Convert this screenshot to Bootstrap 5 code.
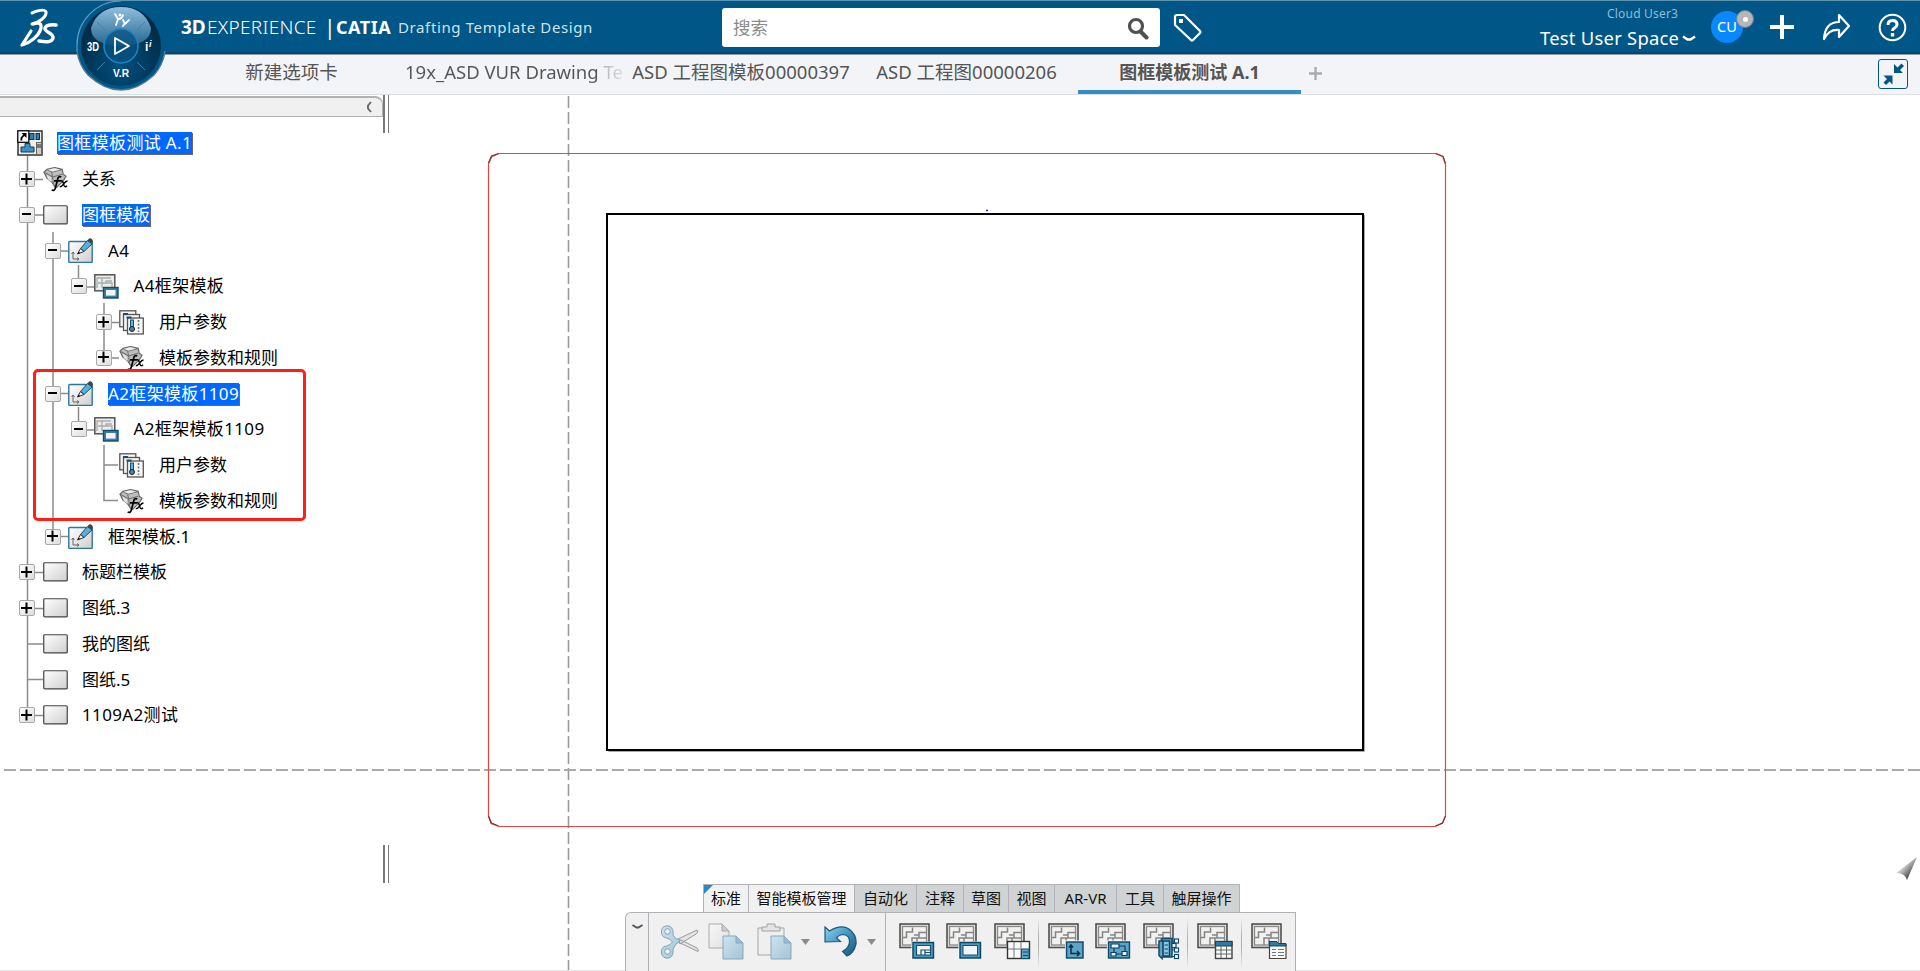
<!DOCTYPE html>
<html lang="zh-CN">
<head>
<meta charset="utf-8">
<title>3DEXPERIENCE | CATIA Drafting Template Design</title>
<link href="https://cdn.jsdelivr.net/npm/bootstrap@5.3.0/dist/css/bootstrap.min.css" rel="stylesheet">
<style>
body{width:1920px;height:971px;overflow:hidden;background:#fff;font-family:"Noto Sans","Noto Sans CJK SC",sans-serif;color:#000;white-space:nowrap}
svg{display:block;flex:none}
.topbar{height:55px;background:#005686;border-top:1px solid #5e93b0;border-bottom:1px solid #8f9aa0;box-shadow:inset 0 -2px #004870;color:#fff}
.brand-logo{margin-left:18px}
.compass{left:72px;top:0;z-index:5}
.app-title{margin-left:121px;width:541px;font-size:18px;line-height:52px}
.app-title .w1{width:26px;font-size:19px;font-weight:700}
.app-title .w2{width:117px;letter-spacing:.3px;font-weight:300;font-size:19px}
.app-title .w3{width:12px;font-size:21px;font-weight:400}
.app-title .w4{width:62px;font-weight:700;font-size:18px;letter-spacing:.5px}
.app-title .w5{font-size:15px;letter-spacing:.62px;color:#cfe2ee}
.search{width:438px;height:39px;border-radius:3px;background:#fff;color:#8b8b8b;font-size:17.5px;margin-top:7px;padding:0 11px 0 11px}
.user-box{width:160px;margin-left:337px}
.user-name{font-size:12px;line-height:14px;color:#8fbcd6;letter-spacing:.2px;padding-left:67px;margin-top:6px}
.user-space{font-size:18.4px;line-height:22px;letter-spacing:.25px;margin-top:6px}
.avatar-cu{width:32px;height:32px;background:#0a88ff;font-size:14.5px;margin:10px 0 0 11px;line-height:30px}
.avatar-dot{left:25px;top:-1px;width:18px;height:18px;background:#b4b6b8;border:1px solid #68818f}
.avatar-dot::after{content:"";width:5px;height:5px;border-radius:50%;background:#fff}
.tabbar{height:40px;background:#f3f4f7;border-bottom:1px solid #dcdfe4;padding-left:186px;color:#555;font-size:18.5px}
.doc-tab{width:223px;height:39px;line-height:34px;text-align:center;overflow:hidden}
.doc-tab.current{font-weight:700;border-bottom:4px solid #368ec4;font-size:18px}
.fade-tail{background:linear-gradient(90deg,#555 192px,#bbb 200px,#d8d8dc 217px,transparent 219px);-webkit-background-clip:text;color:transparent;text-align:left}
.shrink-btn{width:30px;height:30px;border:1px solid #005686;border-radius:3px;margin:4px 12px 0 0}
.workspace{height:876px}
.side{width:389px}
.side-head{width:383px;height:21px;margin-top:1px;background:#f0f0f0;border:1px solid #b0b0b5;border-left:0;border-top-width:2px;border-radius:0 8px 0 0;padding-right:10px}
.grip{right:0;width:6px;height:38px;border-left:2px solid #777;border-right:1px solid #777}
.tree{padding-top:8.5px;font-size:17px}
.tree-row{height:35.75px;gap:8px}
.tree-row .lbl{line-height:22px;height:22px;margin-left:6px}
.tree-row .sel{background:#0068ff;color:#fff;box-shadow:1px 1px #667;}
.l0{padding-left:17px}.l1{padding-left:19px}.l2{padding-left:45px}.l3{padding-left:70.5px}.l4{padding-left:96px}
.l2 svg,.l3 svg,.l4 svg{margin-left:-1px}
.l2 .lbl,.l3 .lbl,.l4 .lbl{margin-left:7px}
.tree-row .lat{letter-spacing:.35px}
.pm{width:16px;height:16px;border:1.5px solid #a8a8a8;border-radius:2px;background:linear-gradient(135deg,#fff,#ddd);position:relative;flex:none}
.pm::before,.pm.plus::after{content:"";position:absolute;left:2px;top:5.5px;width:9px;height:2px;background:#000}
.pm.plus::before,.pm.plus::after{left:1px;width:11px}
.pm.plus::after{transform:rotate(90deg)}
.nopm{width:16px;flex:none}
.callout{left:33px;top:274px;width:273px;height:152px;border:3.5px solid #ff2015;border-radius:5px}
.dock{left:625px;top:789px;width:671px}
.dock-tabs{margin-left:78px;height:28px;font-size:15px;color:#111}
.dock-tab{border:1px solid #b2b3b8;border-left:0;border-bottom:0;height:28px;background:#cfd3d4;text-align:center;line-height:26px;flex:none}
.dock-tab.on{background:#f1f1f1}
.dock-tab:first-child{border-left:1px solid #b2b3b8;position:relative}
.dock-tab:first-child::before{content:"";position:absolute;left:0;top:0;border-top:9px solid #2f87c2;border-right:9px solid transparent}
.dock-panel{height:60px;background:#f0f0f0;border:1px solid #b0b0b5;border-top-width:1.5px;border-bottom:0;border-radius:6px 0 0 0}
.dock-panel>svg{position:relative;top:-1px}
.vsep{width:1px;height:52px;background:linear-gradient(#f0f0f0,#b0b0b5 40%,#b0b0b5 60%,#f0f0f0);flex:none}
.vfull{width:1px;height:60px;background:#b0b0b5;flex:none}
</style>
</head>
<body>
<svg width="0" height="0" class="position-absolute">
<defs>
<linearGradient id="gs" x1="0" y1="0" x2="1" y2="1"><stop offset="0" stop-color="#fff"/><stop offset="1" stop-color="#cfcfcf"/></linearGradient>
<linearGradient id="gp" x1="0" y1="0" x2="1" y2="1"><stop offset="0" stop-color="#cfe3ee"/><stop offset="1" stop-color="#a3c4d6"/></linearGradient>
<linearGradient id="gu" x1="0" y1="0" x2="1" y2="1"><stop offset="0" stop-color="#8ed0f0"/><stop offset=".5" stop-color="#3f93bd"/><stop offset="1" stop-color="#1d516c"/></linearGradient>
<linearGradient id="gc" x1="0" y1="0" x2="0" y2="1"><stop offset="0" stop-color="#8fbfdd"/><stop offset="1" stop-color="#24658f"/></linearGradient>
<radialGradient id="gd" cx=".5" cy=".75" r=".6"><stop offset="0" stop-color="#00507f"/><stop offset="1" stop-color="#002c48"/></radialGradient>
<linearGradient id="ga" x1="0" y1="0" x2="1" y2="1"><stop offset=".3" stop-color="#f4f4f4"/><stop offset=".85" stop-color="#222"/></linearGradient>
<symbol id="i-sheet" viewBox="0 0 25 20"><rect x=".75" y=".75" width="23.5" height="18.2" rx="1" fill="url(#gs)" stroke="#444" stroke-width="1.2"/></symbol>
<symbol id="i-pen" viewBox="0 0 25 25"><rect x=".8" y="3.500" width="23.400" height="21" rx="1" fill="url(#gs)" stroke="#2c7698" stroke-width="1.400"/><path d="M5 14v7h6M3.500 16L5 14l1.500 2M9 19.500l2 1.500-2 1.500" fill="none" stroke="#666"/><path d="M12.500 10.500l7-8 4.500 3.500-8 7.500z" fill="#58b0dc" stroke="#184f6c"/><path d="M9.500 16l3-5.500 3.500 3z" fill="#eee" stroke="#333"/><path d="M9.500 16l1.200-2.200 1.400 1.200z" fill="#000"/><path d="M19.500 2.500l1.500-2q3-1 4 2.500l-1 3z" fill="#444"/></symbol>
<symbol id="i-frame" viewBox="0 0 25 25"><rect x=".8" y=".8" width="20" height="16" fill="#ededed" stroke="#555" stroke-width="1.500"/><path d="M3 14V4h14M4 9h4V4M8 14V9h10v5M12 9V7h6" fill="none" stroke="#aaa" stroke-width="1.300"/><rect x="9.500" y="13.500" width="14.500" height="10.500" fill="#3a7fa6" stroke="#114c6e" stroke-width="1.400"/><rect x="12" y="16" width="9.500" height="5.600" fill="#f5f5f5"/></symbol>
<symbol id="i-param" viewBox="0 0 25 25"><g fill="#f6f6f6" stroke="#555" stroke-width="1.300"><rect x=".8" y=".8" width="16" height="16"/><rect x="4.500" y="4.500" width="16" height="16"/><rect x="8.500" y="8" width="15.800" height="16"/></g><path d="M4 4h5M7.500 7.500h5" stroke="#1c4c68" stroke-width="1.800"/><rect x="11.500" y="10" width="3" height="8" fill="#63b3dc" stroke="#164f70"/><circle cx="13" cy="19" r="2.500" fill="#3b87b0" stroke="#222"/><path d="M19.500 10v12" stroke="#777" stroke-dasharray="2 1.500" stroke-width="1.600"/></symbol>
<symbol id="i-fx" viewBox="0 0 26 26"><path d="M1 6L4 3l8-2 8 2 1 5 3 2-3 5-6 6-2 1-4-6-5-4z" fill="#bdbdbd" stroke="#666" stroke-width="1.200" stroke-linejoin="round"/><path d="M4 3l5 3 11-3M9 6l1 5 10-3M1 6l4 2 5 3 1 7" fill="none" stroke="#707070" stroke-width="1.100"/><path d="M5 3.500l7-1.700 6 1.500-8 2z" fill="#eee"/><path d="M4 8.500l4 2.500 1 5-4-3z" fill="#e2e2e2"/><path d="M19 11q-3-2-4 3l-2 8q-1 4-4 2.500M11.500 15h7" fill="none" stroke="#000" stroke-width="1.800"/><path d="M18 15q2-1 3 2l1 3q1 2 3 0M25.500 15q-2 0-4 3t-4 3" fill="none" stroke="#000" stroke-width="1.500"/></symbol>
<symbol id="i-root" viewBox="0 0 26 26"><rect x="1" y="1" width="24" height="24" fill="#eee" stroke="#333" stroke-width="1.500"/><rect x="12.500" y="3.500" width="4.500" height="6" fill="#2b7fa8" stroke="#0c3750"/><rect x="19" y="3.500" width="3.500" height="6" fill="#2b7fa8" stroke="#0c3750"/><path d="M4 22v-5h4v-3.500h5V17h4v5z" fill="#3f90b8" stroke="#0e405c"/><rect x="19.500" y="12.500" width="5" height="12" fill="#ccc" stroke="#666"/><path d="M20 14h4v4h-4z" fill="#777"/><rect x=".8" y=".8" width="11" height="11.500" fill="#fff" stroke="#111" stroke-width="1.300"/><path d="M4.500 10.500q-1-3 3-5.500" fill="none" stroke="#000" stroke-width="1.800"/><path d="M4.500 3h5v5z" fill="#000"/></symbol>
<symbol id="i-base" viewBox="0 0 37 37"><rect x="1" y="1" width="29" height="23.500" fill="#e3e3e1" stroke="#505050" stroke-width="1.600"/><rect x="3.500" y="3.500" width="24" height="18.500" fill="#f1f1ef" stroke="#8a8a8a" stroke-width="1.300"/><path d="M4 14.500h3.500V9h6V4.500M13 22v-7h14M18 15v7M20 15V9.500h7M20 12h-5" fill="none" stroke="#858585" stroke-width="1.500"/></symbol>
</defs>
</svg>

<header class="topbar d-flex position-relative">
  <svg class="brand-logo" width="42" height="54" viewBox="0 0 42 54" fill="none" stroke="#fff" stroke-linecap="round" stroke-linejoin="round"><path d="M14 12q12-5 14-1c1 5-8 11-14 12" stroke-width="3"/><path d="M15 23q9-3 8 4c-2 8-11 15-19 17L13 30" stroke-width="3.200"/><path d="M38 24q-9-1-11 3c-1 4 9 5 8 10-1 5-8 4-14 3" stroke-width="3.500"/></svg>
  <svg class="compass position-absolute" width="98" height="92" viewBox="0 0 98 92">
    <path d="M5 50V45A44 44 0 0 1 49 1a44 44 0 0 1 44 44v7q-2 12-10 21Q66 89 49 89T15 73Q7 64 5 50z" fill="#005686"/>
    <path d="M5 50V44A44 44 0 0 1 49 0" fill="none" stroke="#5f9cc0" stroke-width="1.200"/>
    <path d="M5 50q2 14 11 24Q32 89 49 89t33-15q9-10 11-24" fill="none" stroke="#52798f" stroke-width="1.500"/>
    <ellipse cx="49" cy="45" rx="40" ry="40" fill="url(#gd)"/>
    <path d="M19 27Q26 6 49 6t30 21q0 17-30 18Q19 44 19 27z" fill="url(#gc)"/>
    <path d="M25 21l8 8M73 21l-8 8M25 69l8-8M73 69l-8-8" stroke="#3d7fa8"/>
    <circle cx="49" cy="45" r="17" fill="#075181" fill-opacity=".75" stroke="#1e86bf" stroke-width="1.500"/>
    <path d="M43 37v16l14-8z" fill="none" stroke="#fff" stroke-width="1.800" stroke-linejoin="round"/>
    <g fill="none" stroke="#fff" stroke-width="1.800" stroke-linecap="round"><path d="M43 13l3 5q4 0 5-4M46 18l-2 6M51 19l2 4 4-4M53 22l-2 3"/></g>
    <circle cx="48" cy="14" r="1.500" fill="#fff"/>
    <g fill="#fff" font-family="Liberation Sans" font-weight="700" font-size="12"><text x="15" y="49.500" textLength="12" lengthAdjust="spacingAndGlyphs">3D</text><text x="73" y="50">i</text><text x="77" y="46" font-size="9" font-style="italic">i</text><text x="41" y="76" font-size="11" textLength="16" lengthAdjust="spacingAndGlyphs">V.R</text></g>
  </svg>
  <div class="app-title d-flex"><span class="w1">3D</span><span class="w2">EXPERIENCE</span><span class="w3">|</span><span class="w4">CATIA</span><span class="w5">Drafting Template Design</span></div>
  <div class="search d-flex align-items-center justify-content-between"><span>搜索</span><svg width="22" height="24" viewBox="0 0 22 24" fill="none" stroke="#505050"><circle cx="9" cy="10" r="6.500" stroke-width="3.200"/><path d="M13.500 15.500l6 6" stroke-width="4" stroke-linecap="round"/></svg></div>
  <svg style="margin:12px 0 0 13px" width="30" height="30" viewBox="0 0 30 30" fill="none" stroke="#fff"><path d="M2 12V4q0-2 2-2h7L27 18q1 1 0 2l-7 7q-1 1-2 0z" stroke-width="2.200" stroke-linejoin="round"/><rect x="6" y="6" width="4" height="4" fill="#fff" stroke="none"/></svg>
  <div class="user-box"><div class="user-name">Cloud User3</div><div class="user-space d-flex align-items-center justify-content-between"><span>Test User Space</span><svg class="me-1" width="14" height="9" viewBox="0 0 14 9"><path d="M1 2.500l4.500 3h3l4.500-3" fill="none" stroke="#fff" stroke-width="2.600" stroke-linejoin="round"/></svg></div></div>
  <div class="avatar-cu rounded-circle text-center position-relative">CU<span class="avatar-dot rounded-circle position-absolute d-flex align-items-center justify-content-center"></span></div>
  <svg style="margin:14px 0 0 27px" width="24" height="24" viewBox="0 0 24 24"><path d="M12 0v24M0 12h24" stroke="#fff" stroke-width="4"/></svg>
  <svg style="margin:12px 0 0 28px" width="30" height="30" viewBox="0 0 30 30"><path d="M2 26Q3 9 17 9V2l10 11-10 11v-7Q7 16 2 26z" fill="none" stroke="#fff" stroke-width="2.200" stroke-linejoin="round"/></svg>
  <svg style="margin:12px 0 0 26px" width="29" height="29" viewBox="0 0 29 29" fill="none" stroke="#fff"><circle cx="14.500" cy="14.500" r="12.800" stroke-width="2"/><path d="M10 12q0-4.500 4.500-4.500t4.500 4q0 2-2.500 3.500-2 1-2 3" stroke-width="3"/><path d="M14.500 20v3.500" stroke-width="3.400"/></svg>
</header>

<nav class="tabbar d-flex">
  <div class="doc-tab" style="text-indent:-12px">新建选项卡</div>
  <div class="doc-tab fade-tail" style="margin-left:-4px">19x_ASD VUR Drawing Te</div>
  <div class="doc-tab" style="margin-left:4px;text-indent:-5px">ASD 工程图模板00000397</div>
  <div class="doc-tab">ASD 工程图00000206</div>
  <div class="doc-tab current">图框模板测试 A.1</div>
  <svg style="margin:12px auto 0 8px" width="13" height="13" viewBox="0 0 13 13"><path d="M6.500 0v13M0 6.500h13" stroke="#aaa" stroke-width="2.400"/></svg>
  <div class="shrink-btn"><svg width="28" height="28" viewBox="0 0 28 28" fill="#005686"><path d="M15 4v9h9l-3-3 4-4-2.500-2.500-4 4zM4.500 15.500h9v9l-3-3-3.500 3.500-2.500-2.500 3.500-3.500z"/></svg></div>
</nav>

<main class="workspace d-flex position-relative">
  <aside class="side position-relative">
    <div class="side-head d-flex align-items-center justify-content-end"><svg width="6" height="12" viewBox="0 0 6 12"><path d="M5 1L2 4.500v3L5 11" fill="none" stroke="#666" stroke-width="1.900"/></svg></div>
    <div class="grip position-absolute top-0"></div>
    <div class="grip position-absolute" style="top:750px"></div>
    <svg class="position-absolute top-0 start-0" width="380" height="640" fill="none" stroke="#8c8c8c" stroke-width="1.500"><path d="M27.500 60V620M53 137V442M78.500 170v22M104 208v55M78.500 312v24M104 350v55.500h14M104 370h14M27 549h16M27 584.500h16"/><path d="M34 84.500h9M34 120h10M34 477.500h10M34 513.500h10M34 620.500h10M60 156h9M60 298.500h9M60 441.500h9M85 192h9M85 335h9M111 227.500h8M111 263h8"/></svg>
    <div class="tree position-relative">
      <div class="tree-row l0 d-flex align-items-center"><svg width="26" height="26"><use href="#i-root"/></svg><span class="lbl sel lat">图框模板测试 A.1</span></div>
      <div class="tree-row l1 d-flex align-items-center"><i class="pm plus"></i><svg width="25" height="26"><use href="#i-fx"/></svg><span class="lbl">关系</span></div>
      <div class="tree-row l1 d-flex align-items-center"><i class="pm"></i><svg width="25" height="20"><use href="#i-sheet"/></svg><span class="lbl sel">图框模板</span></div>
      <div class="tree-row l2 d-flex align-items-center"><i class="pm"></i><svg width="25" height="25"><use href="#i-pen"/></svg><span class="lbl lat">A4</span></div>
      <div class="tree-row l3 d-flex align-items-center"><i class="pm"></i><svg width="25" height="25"><use href="#i-frame"/></svg><span class="lbl lat">A4框架模板</span></div>
      <div class="tree-row l4 d-flex align-items-center"><i class="pm plus"></i><svg width="25" height="25"><use href="#i-param"/></svg><span class="lbl">用户参数</span></div>
      <div class="tree-row l4 d-flex align-items-center"><i class="pm plus"></i><svg width="25" height="26"><use href="#i-fx"/></svg><span class="lbl">模板参数和规则</span></div>
      <div class="tree-row l2 d-flex align-items-center"><i class="pm"></i><svg width="25" height="25"><use href="#i-pen"/></svg><span class="lbl sel lat">A2框架模板1109</span></div>
      <div class="tree-row l3 d-flex align-items-center"><i class="pm"></i><svg width="25" height="25"><use href="#i-frame"/></svg><span class="lbl lat">A2框架模板1109</span></div>
      <div class="tree-row l4 d-flex align-items-center"><i class="nopm"></i><svg width="25" height="25"><use href="#i-param"/></svg><span class="lbl">用户参数</span></div>
      <div class="tree-row l4 d-flex align-items-center"><i class="nopm"></i><svg width="25" height="26"><use href="#i-fx"/></svg><span class="lbl">模板参数和规则</span></div>
      <div class="tree-row l2 d-flex align-items-center"><i class="pm plus"></i><svg width="25" height="25"><use href="#i-pen"/></svg><span class="lbl">框架模板.1</span></div>
      <div class="tree-row l1 d-flex align-items-center"><i class="pm plus"></i><svg width="25" height="20"><use href="#i-sheet"/></svg><span class="lbl">标题栏模板</span></div>
      <div class="tree-row l1 d-flex align-items-center"><i class="pm plus"></i><svg width="25" height="20"><use href="#i-sheet"/></svg><span class="lbl">图纸.3</span></div>
      <div class="tree-row l1 d-flex align-items-center"><i class="nopm"></i><svg width="25" height="20"><use href="#i-sheet"/></svg><span class="lbl">我的图纸</span></div>
      <div class="tree-row l1 d-flex align-items-center"><i class="nopm"></i><svg width="25" height="20"><use href="#i-sheet"/></svg><span class="lbl">图纸.5</span></div>
      <div class="tree-row l1 d-flex align-items-center"><i class="pm plus"></i><svg width="25" height="20"><use href="#i-sheet"/></svg><span class="lbl lat">1109A2测试</span></div>
    </div>
    <div class="callout position-absolute"></div>
  </aside>

  <!-- drawing sheet; user units are page pixels -->
  <svg class="position-absolute top-0 start-0" width="1920" height="876" viewBox="0 95 1920 876" fill="none">
    <path d="M568.500 96V971" stroke="#999" stroke-width="1.600" stroke-dasharray="12 4"/>
    <path d="M4 770H1920" stroke="#aaa" stroke-width="1.800" stroke-dasharray="12 4"/>
    <rect x="607" y="214" width="756" height="536" stroke="#000" stroke-width="2"/>
    <path d="M608.500 751.500H1364.500V215" stroke="#aaa"/>
    <path d="M499 153.500H1435l8 3 2.500 8V816l-3 7-7 3.500H499l-8-3-2.500-7V164l3-7z" stroke="#dc4848" stroke-width="1.200"/>
    <path d="M488.500 163l3-7 7-2.500M1436 153.500l7 3 2.500 7M1445.500 816l-3 7-7 3M488.500 816l3 7 7 3" stroke="#8e2a30" stroke-width="1.200"/>
    <path d="M986 210.500h2" stroke="#22c" stroke-width="1.500"/>
    <path d="M1917 857l-10 23q-2-7-11-7z" fill="url(#ga)"/>
    <path d="M0 970.500H1920" stroke="#e4e4e4"/>
  </svg>

  <div class="dock position-absolute">
    <div class="dock-tabs d-flex">
      <div class="dock-tab on" style="width:46px">标准</div><div class="dock-tab on" style="width:106px">智能模板管理</div><div class="dock-tab" style="width:62px">自动化</div><div class="dock-tab" style="width:47px">注释</div><div class="dock-tab" style="width:45px">草图</div><div class="dock-tab" style="width:46px">视图</div><div class="dock-tab" style="width:62px">AR-VR</div><div class="dock-tab" style="width:47px">工具</div><div class="dock-tab" style="width:76px">触屏操作</div>
    </div>
    <div class="dock-panel d-flex align-items-center">
      <svg width="22" height="60" viewBox="0 0 22 60"><path d="M6.500 13l4 2.500h2l4-2.500" fill="none" stroke="#555" stroke-width="2"/></svg><div class="vfull"></div>
      <svg class="me-2" style="margin-left:11px" width="40" height="36" viewBox="0 0 40 36"><path d="M18 15L37 6q2 2-1 4L20 20zM18 18l3-2 16 8q2 2 1 3.500z" fill="#e3e3e3" stroke="#999"/><path d="M16 20q4-2 4-4-5-1-7-5 1-7-4-9Q2 1 1.500 7t5 7q4 1 6 4-2 3-6 4-6 1-5 7t7.500 5q5-2 4-9z" fill="url(#gp)" stroke="#7fa3b5"/><circle cx="7.500" cy="7.500" r="2.800" fill="#f0f0f0" stroke="#7fa3b5"/><circle cx="7.500" cy="27.500" r="2.800" fill="#f0f0f0" stroke="#7fa3b5"/></svg>
      <svg width="36" height="37" viewBox="0 0 36 37"><path d="M1 1h13l7 7v17H1z" fill="url(#gs)" fill-opacity=".5" stroke="#aaa"/><path d="M14 1v7h7z" fill="#ccc" stroke="#aaa"/><path d="M15 13h13l7 7v16H15z" fill="url(#gp)" stroke="#84a9bb"/><path d="M28 13v7h7z" fill="#9abfd0" stroke="#84a9bb"/></svg>
      <svg style="margin-left:13px" width="35" height="37" viewBox="0 0 35 37"><path d="M1 5h26v27H1z" fill="#efefef" stroke="#a5a5a5"/><path d="M5 8V4h5V1h8v3h5v4z" fill="#e4e4e4" stroke="#a0a0a0"/><path d="M14 13h13l7 7v16H14z" fill="url(#gp)" stroke="#84a9bb"/><path d="M27 13v7h7z" fill="#9abfd0" stroke="#84a9bb"/></svg>
      <svg style="margin-left:9px" width="9" height="6"><path d="M0 0h9L4.500 6z" fill="#8b8b8b"/></svg>
      <svg style="margin-left:14px" width="34" height="34" viewBox="0 0 34 34"><path d="M1 2l4.500 4Q17-1 25 4q8 6 7 15-2 9-9 12l-4.500-4.500q7-4 7-10 0-6-6-7-4 0-7 3.500l4 3.500L1 17z" fill="url(#gu)" stroke="#1b5878" stroke-width="1.200"/></svg>
      <svg style="margin-left:9px" width="9" height="6"><path d="M0 0h9L4.500 6z" fill="#8b8b8b"/></svg>
      <div class="vfull" style="margin-left:9px"></div>
      <svg style="margin-left:13px" width="37" height="37"><use href="#i-base"/><rect x="12.500" y="18.500" width="23" height="17.500" fill="#fff"/><rect x="14" y="19.500" width="20.500" height="15.500" fill="#4d9abf" stroke="#0e4666" stroke-width="1.500"/><path d="M17.500 22.500h14v9.500h-14zM22 32v-5h9M26 27v5M26 29.500h5" fill="#f3f3f3" stroke="#174f70" stroke-width="1.200"/></svg>
      <svg style="margin-left:10px" width="37" height="37"><use href="#i-base"/><rect x="12.500" y="18.500" width="23" height="17.500" fill="#fff"/><rect x="14" y="19.500" width="20.500" height="15.500" fill="#4d9abf" stroke="#0e4666" stroke-width="1.500"/><rect x="17" y="22.500" width="14.500" height="9.500" fill="#f3f3f3" stroke="#174f70"/></svg>
      <svg style="margin-left:11px" width="37" height="37"><use href="#i-base"/><rect x="13.500" y="18.500" width="22" height="17" fill="#fafafa" stroke="#333" stroke-width="1.400"/><path d="M14 26h13M20 19v16M27 19v16" stroke="#777"/><path d="M27.500 26h7.500v9.500h-7.500z" fill="#5aa5c8" stroke="#124a69"/><path d="M29 29h5M29 32.500h5" stroke="#124a69"/></svg>
      <div class="vsep" style="margin-left:7px"></div>
      <svg style="margin-left:9px" width="37" height="37"><use href="#i-base"/><rect x="17" y="17.500" width="19" height="18.500" fill="#fff"/><rect x="18.500" y="19" width="16.500" height="16" fill="#5aa5c8" stroke="#124a69" stroke-width="1.500"/><path d="M23 22v8.500h8M21 24.500l2-2.500 2 2.500M29 28l2.500 2.500L29 33" fill="none" stroke="#0a2f46" stroke-width="1.500"/></svg>
      <svg style="margin-left:10px" width="37" height="37"><use href="#i-base"/><rect x="12" y="17.500" width="24" height="18.500" fill="#fff"/><rect x="13.500" y="19" width="21" height="16" fill="#5aa5c8" stroke="#124a69" stroke-width="1.500"/><path d="M24 23h6v5.500M19 25v4.500M21 31h6" fill="none" stroke="#0e4060" stroke-width="1.200"/><path d="M16 21h8v4h-8zM16 29.500h5v3.500h-5zM27 28.500h5v4h-5z" fill="#e4f0f6" stroke="#0e4060" stroke-width="1.200"/></svg>
      <svg style="margin-left:11px" width="37" height="37"><use href="#i-base"/><path d="M16 18h3v-2.500h10V34h-10v1.500l-3-3z" fill="#5aa5c8" stroke="#124a69" stroke-width="1.500"/><path d="M20 18h6.500v15H20z" fill="#8cc3de" stroke="#0e4060" stroke-width="1.500"/><path d="M21.500 22h3.500M21.500 26h3.500M21.500 30h3.500M29 19h3M29 27h3M29 33.500h3" stroke="#124a69"/><g fill="#fff" stroke="#124a69" stroke-width="1.200"><rect x="31.500" y="16" width="4" height="4"/><rect x="29" y="20.500" width="4" height="4"/><rect x="31.500" y="25" width="4" height="4"/><rect x="31.500" y="31.500" width="4" height="4"/></g></svg>
      <div class="vsep" style="margin-left:7px"></div>
      <svg style="margin-left:9px" width="37" height="37"><use href="#i-base"/><rect x="18.500" y="18.500" width="16.500" height="17" fill="#fafafa" stroke="#444" stroke-width="1.400"/><path d="M18.500 18.500H35V23H18.500z" fill="#2d7ba3" stroke="#0e4666"/><path d="M24 23v12M29.500 23v12M19 27h16M19 31h16" stroke="#666"/></svg>
      <div class="vsep" style="margin-left:7px"></div>
      <svg style="margin-left:9px" width="37" height="37"><use href="#i-base"/><path d="M18.500 18.500h7l2 3H35v14H18.500z" fill="#fafafa" stroke="#444" stroke-width="1.200"/><path d="M18.500 18.500h7l2 2H35V23H18.500z" fill="#2d7ba3" stroke="#0e4666"/><path d="M21 26.500h4M27 26.500h6M21 29.500h4M27 29.500h6M21 32.500h4M27 32.500h6" stroke="#777"/></svg>
    </div>
  </div>
</main>
<script src="https://cdn.jsdelivr.net/npm/bootstrap@5.3.0/dist/js/bootstrap.bundle.min.js"></script>
</body>
</html>
